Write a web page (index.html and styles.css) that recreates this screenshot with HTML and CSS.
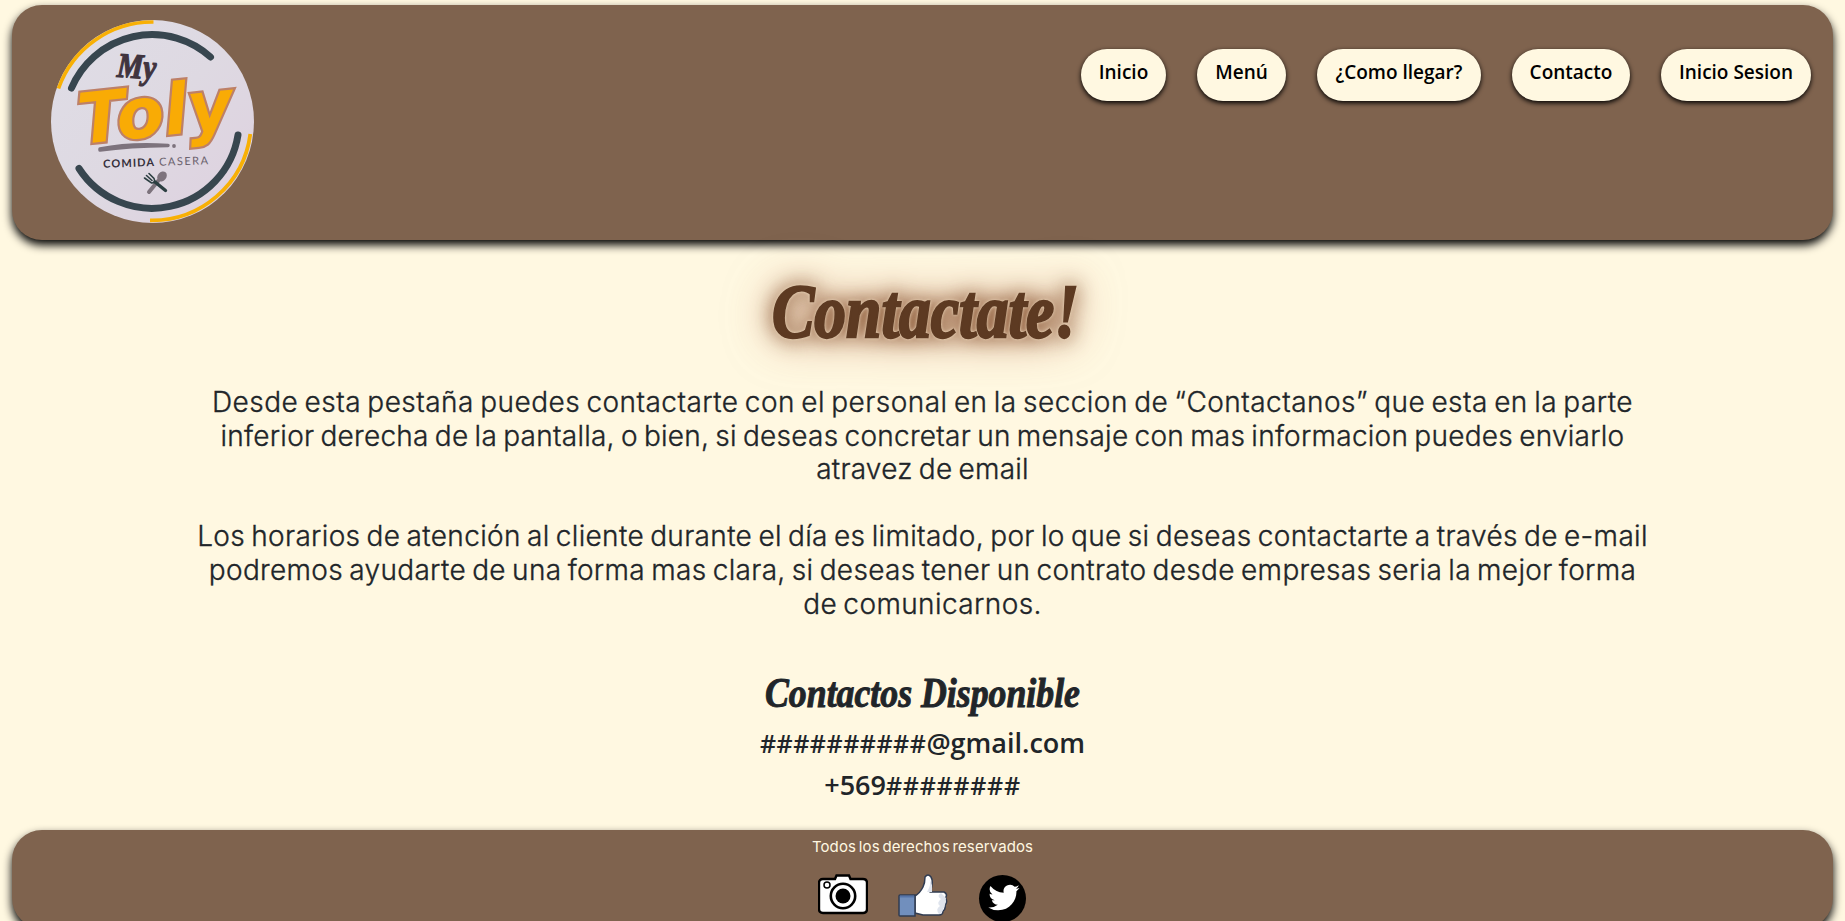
FILE: index.html
```html
<!DOCTYPE html>
<html lang="es">
<head>
<meta charset="utf-8">
<title>My Toly - Contacto</title>
<link rel="stylesheet" href="styles.css">
</head>
<body>
<header class="site-header">
  <svg class="logo" viewBox="51 20 203 203" role="img" aria-label="My Toly">
    <defs>
      <linearGradient id="disc" x1="0" y1="0" x2="1" y2="1">
        <stop offset="0" stop-color="#dfdde6"/>
        <stop offset=".5" stop-color="#ded9e2"/>
        <stop offset="1" stop-color="#ded0df"/>
      </linearGradient>
    </defs>
    <circle cx="152.500" cy="121.500" r="101.500" fill="url(#disc)"/>
    <g fill="none" stroke-linecap="butt">
      <path d="M58.500 88.500A99.500 99.500 0 0 1 153.500 22" stroke="#f8b005" stroke-width="3.600"/>
      <path d="M250.300 134A99 99 0 0 1 150 220.300" stroke="#f8b005" stroke-width="3.800"/>
      <path d="M71.500 88A87.500 87.500 0 0 1 210.500 57" stroke="#37464f" stroke-width="7" stroke-linecap="round"/>
      <path d="M238 135A87 87 0 0 1 79 168.500" stroke="#37464f" stroke-width="7" stroke-linecap="round"/>
    </g>
    <text class="logo-my" x="117" y="78" textLength="39" lengthAdjust="spacingAndGlyphs" transform="rotate(4 135 70)">My</text>
    <g transform="rotate(-6 155 115)">
      <text class="logo-toly" x="78" y="136" textLength="155" lengthAdjust="spacingAndGlyphs">Toly</text>
    </g>
    <path d="M100 149Q130 143 168 145.500Q130 146 100 150Z" fill="#7d737d" stroke="#7d737d" stroke-width="3.500" stroke-linejoin="round"/>
    <circle cx="174" cy="146" r="1.900" fill="#7d737d"/>
    <g transform="rotate(-2 155 162)">
      <text class="logo-tag logo-tag-bold" x="103" y="166" textLength="51" lengthAdjust="spacing">COMIDA</text>
      <text class="logo-tag" x="159" y="166" textLength="49" lengthAdjust="spacing">CASERA</text>
    </g>
    <path d="M149 192L158 181" stroke="#7d737d" stroke-width="4" stroke-linecap="round"/>
    <ellipse cx="162" cy="176.500" rx="4.300" ry="5.500" transform="rotate(40 162 176.500)" fill="#7d737d"/>
    <path d="M155 182L165.500 190.500" stroke="#2c3f42" stroke-width="3.400" stroke-linecap="round"/>
    <path d="M149 173.500L154 178.500Q156 183 151.500 183L144.500 178M146.500 175.500L152 180.500" fill="none" stroke="#2c3f42" stroke-width="1.600" stroke-linecap="round"/>
  </svg>
  <nav class="nav">
    <a class="pill pill-inicio">Inicio</a>
    <a class="pill pill-menu">Menú</a>
    <a class="pill pill-llegar">¿Como llegar?</a>
    <a class="pill pill-contacto">Contacto</a>
    <a class="pill pill-sesion">Inicio Sesion</a>
  </nav>
</header>
<main class="content">
  <h1 class="title"><svg class="title-art" viewBox="0 0 320 86"><text class="script title-text" x="6" y="62" textLength="307" lengthAdjust="spacingAndGlyphs">Contactate!</text></svg></h1>
  <p class="copy">
    <span class="line l1">Desde esta pestaña puedes contactarte con el personal en la seccion de “Contactanos” que esta en la parte</span>
    <span class="line l2">inferior derecha de la pantalla, o bien, si deseas concretar un mensaje con mas informacion puedes enviarlo</span>
    <span class="line l3">atravez de email</span>
  </p>
  <p class="copy">
    <span class="line l4">Los horarios de atención al cliente durante el día es limitado, por lo que si deseas contactarte a través de e-mail</span>
    <span class="line l5">podremos ayudarte de una forma mas clara, si deseas tener un contrato desde empresas seria la mejor forma</span>
    <span class="line l6">de comunicarnos.</span>
  </p>
  <h2 class="subtitle"><svg class="subtitle-art" viewBox="0 0 320 50"><text class="script subtitle-text" x="2" y="35" textLength="315" lengthAdjust="spacingAndGlyphs">Contactos Disponible</text></svg></h2>
  <div class="contact"><span class="hash">##########</span><span>@gmail.com</span></div>
  <div class="contact"><span>+569</span><span class="hash hash-phone">########</span></div>
</main>
<footer class="site-footer">
  <span class="rights">Todos los derechos reservados</span>
  <div class="social">
    <svg class="icon" viewBox="0 0 50 48">
      <path d="M5 5H17L18.500 1.500H31L32.500 5H45Q49 5 49 9V35Q49 39 45 39H5Q1 39 1 35V9Q1 5 5 5Z" fill="#fff" stroke="#000" stroke-width="2.400"/>
      <circle cx="25" cy="22" r="12.200" fill="#fff" stroke="#000" stroke-width="2.600"/>
      <circle cx="25" cy="22" r="7.500"/>
      <circle cx="9" cy="11" r="3" fill="#fff" stroke="#000" stroke-width="1.500"/>
    </svg>
    <svg class="icon" viewBox="0 0 50 48">
      <path d="M17 22Q22 19 25 13Q27 9 27 3Q30-1 33 3Q36 8 32 18H46Q50 20 47.500 24Q50 28 47 31Q48 35 45 37Q45 41 41 41H25L17 39Z" fill="#fff" stroke="#303c52" stroke-width="1.500" stroke-linejoin="round"/>
      <path d="M31 4Q34 10 29 18H34V11ZM43 19Q38 22 43 25Q38 29 42 32Q37 35 41 40H43L45 36L47 31L48 24Z" fill="#dfe4ed"/>
      <path d="M1 22Q1 21 2 21H17V42H2Q1 42 1 41Z" fill="#718fbd" stroke="#303c52" stroke-width="1.500"/>
      <path d="M2 22.500H16" stroke="#5674a8" stroke-width="2"/>
    </svg>
    <svg class="icon" viewBox="0 0 50 48">
      <circle cx="24.500" cy="24.500" r="23.500"/>
      <path transform="translate(9 7) scale(1.380)" fill="#fff" d="M23.643 4.937c-.835.370-1.732.620-2.675.733a4.670 4.670 0 0 0 2.048-2.578 9.300 9.300 0 0 1-2.958 1.130 4.660 4.660 0 0 0-7.938 4.250 13.229 13.229 0 0 1-9.602-4.868c-.400.690-.630 1.490-.630 2.342A4.660 4.660 0 0 0 3.960 9.824a4.647 4.647 0 0 1-2.110-.583v.060a4.660 4.660 0 0 0 3.737 4.568 4.692 4.692 0 0 1-2.104.080 4.661 4.661 0 0 0 4.352 3.234 9.348 9.348 0 0 1-5.786 1.995 9.500 9.500 0 0 1-1.112-.065 13.175 13.175 0 0 0 7.140 2.093c8.570 0 13.255-7.098 13.255-13.254 0-.200-.005-.402-.014-.602a9.470 9.470 0 0 0 2.323-2.410z"/>
    </svg>
  </div>
</footer>
</body>
</html>
```

FILE: styles.css
```css
* { box-sizing: border-box; }
html, body { height: 100%; }
body {
  margin: 0;
  padding: 5px 12px 0;
  overflow: hidden;
  background: #fff8e1;
  color: #212529;
  font-family: "Open Sans", "Noto Sans", sans-serif;
}
.site-header {
  display: flex;
  justify-content: space-between;
  align-items: flex-start;
  height: 235px;
  padding: 15px 22px 0 39px;
  border-radius: 30px;
  background: #7f634e;
  box-shadow: 0 5px 10px #000;
}
.logo { width: 203px; height: 203px; flex: none; }
.logo-my { font: italic 700 35px "Liberation Serif", serif; fill: #40343f; stroke: #40343f; stroke-width: 1.2; }
.logo-toly { font: italic 700 70px "DejaVu Sans", sans-serif; fill: #f9ab05; stroke: #bd8068; stroke-width: 4.5; paint-order: stroke; }
.logo-tag { font: 400 11px Lato, sans-serif; fill: #6b626d; }
.logo-tag-bold { font-weight: 700; fill: #352f3b; }
.nav { display: flex; gap: 31px; margin-top: 29px; }
.pill {
  display: flex;
  justify-content: center;
  height: 52px;
  padding-top: 9px;
  border-radius: 26px;
  background: #fff8e1;
  box-shadow: 0 2px 5px #000;
  color: #000;
  font: 600 19px/28px "Open Sans", sans-serif;
  white-space: nowrap;
}
.pill-inicio { width: 85px; }
.pill-menu { width: 89px; }
.pill-llegar { width: 164px; }
.pill-contacto { width: 118px; }
.pill-sesion { width: 150px; }
.content { height: 590px; display: flex; flex-direction: column; align-items: center; }
.title { width: 320px; height: 86px; margin: 35px 0 25px; padding-left: 3px; }
.title-art, .subtitle-art { display: block; overflow: visible; }
.title-art {
  width: 320px;
  height: 86px;
  filter: drop-shadow(0 0 1.5px #f0dcc0) drop-shadow(0 0 10px rgba(139, 90, 56, 1)) drop-shadow(0 0 20px rgba(190, 130, 100, .65));
}
.script { font-family: "Liberation Serif", serif; font-style: italic; font-weight: 700; }
.title-text { font-size: 76px; fill: #5d3a22; stroke: #5d3a22; stroke-width: 2.4; }
.copy {
  margin: 0 0 33.6px;
  font: 300 28px/33.6px Inter, sans-serif;
  text-align: center;
  word-spacing: -2px;
  -webkit-text-stroke: .35px #212529;
}
.line { display: block; white-space: nowrap; }
.l1 { letter-spacing: .46px; }
.l2 { letter-spacing: .26px; }
.l3 { letter-spacing: .25px; }
.l4 { letter-spacing: .34px; }
.l5 { letter-spacing: .33px; }
.l6 { letter-spacing: .4px; }
.subtitle { width: 320px; height: 50px; margin: 17px 0 0; }
.subtitle-art { width: 320px; height: 50px; }
.subtitle-text { font-size: 42px; fill: #212529; stroke: #212529; stroke-width: 1; }
.contact {
  display: flex;
  align-items: baseline;
  height: 42px;
  font-weight: 600;
  font-size: 27px;
  line-height: 42px;
  white-space: nowrap;
}
.hash { font-size: 25px; letter-spacing: .5px; }
.hash-phone { letter-spacing: .7px; }
.site-footer {
  display: flex;
  flex-direction: column;
  align-items: center;
  height: 98px;
  border-radius: 30px;
  background: #7f634e;
  box-shadow: 0 5px 10px #000;
}
.rights { margin-top: 4px; color: #fff8e1; font: 400 15px/25px Inter, sans-serif; word-spacing: -1.5px; letter-spacing: .1px; }
.social { display: flex; gap: 30px; margin-top: 15px; }
.icon { width: 50px; height: 48px; }
```
